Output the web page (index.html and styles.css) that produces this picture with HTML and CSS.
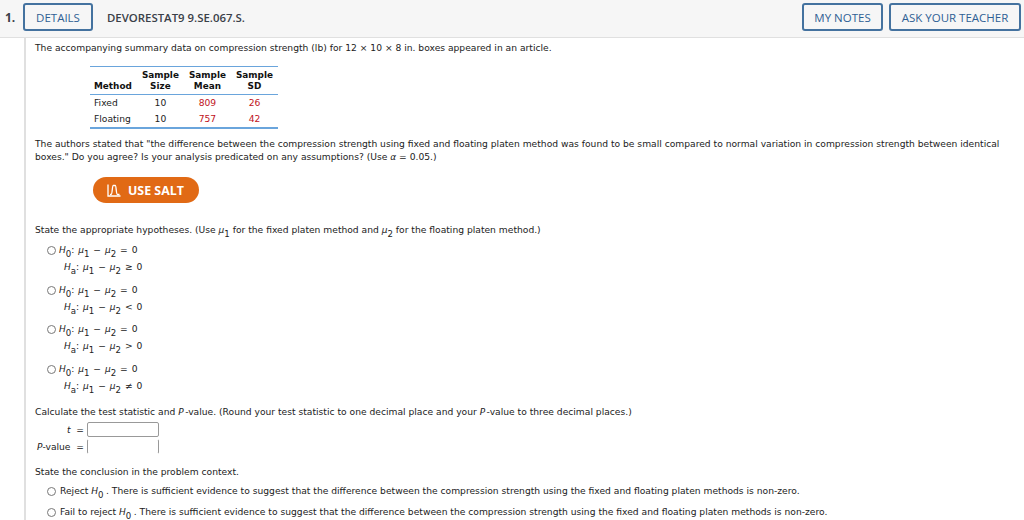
FILE: index.html
```html
<!DOCTYPE html>
<html lang="en">
<head>
<meta charset="utf-8">
<title>DEVORESTAT9 9.SE.067.S.</title>
<link rel="stylesheet" href="styles.css">
</head>
<body>
<header class="bar">
  <span class="qnum">1.</span>
  <button class="btn details">DETAILS</button>
  <span class="code">DEVORESTAT9 9.SE.067.S.</span>
  <span class="spacer"></span>
  <button class="btn notes">MY NOTES</button>
  <button class="btn ask">ASK YOUR TEACHER</button>
</header>
<main class="content">
  <p class="intro">The accompanying summary data on compression strength (lb) for 12 × 10 × 8 in. boxes appeared in an article.</p>
  <table class="data">
    <thead>
      <tr><th class="left">Method</th><th>Sample<br>Size</th><th>Sample<br>Mean</th><th>Sample<br>SD</th></tr>
    </thead>
    <tbody>
      <tr><td class="left">Fixed</td><td>10</td><td class="red">809</td><td class="red">26</td></tr>
      <tr><td class="left">Floating</td><td>10</td><td class="red">757</td><td class="red">42</td></tr>
    </tbody>
  </table>
  <p class="para">The authors stated that "the difference between the compression strength using fixed and floating platen method was found to be small compared to normal variation in compression strength between identical boxes." Do you agree? Is your analysis predicated on any assumptions? (Use <i class="m">α</i> = 0.05.)</p>
  <button class="salt">
    <svg class="salt-icon" viewBox="0 0 14 13" width="14" height="13"><path d="M1 0.5V12H13.5" fill="none" stroke="#fff" stroke-width="1.3"/><path d="M3 10.5H4C5.6 10.5 5 1.5 6.3 1.5H8.2C9.5 1.5 8.9 10.5 10.5 10.5H12.5" fill="none" stroke="#fff" stroke-width="1.3"/></svg>
    USE SALT
  </button>
  <p class="state">State the appropriate hypotheses. (Use <i class="m">μ</i><sub>1</sub> for the fixed platen method and <i class="m">μ</i><sub>2</sub> for the floating platen method.)</p>
  <div class="options">
    <div class="opt"><span class="radio"></span><div class="hyp"><div class="h0"><i class="m">H</i><sub>0</sub>: <i class="m">μ</i><sub>1</sub> − <i class="m">μ</i><sub>2</sub> = 0</div><div class="ha"><i class="m">H</i><sub>a</sub>: <i class="m">μ</i><sub>1</sub> − <i class="m">μ</i><sub>2</sub> ≥ 0</div></div></div>
    <div class="opt"><span class="radio"></span><div class="hyp"><div class="h0"><i class="m">H</i><sub>0</sub>: <i class="m">μ</i><sub>1</sub> − <i class="m">μ</i><sub>2</sub> = 0</div><div class="ha"><i class="m">H</i><sub>a</sub>: <i class="m">μ</i><sub>1</sub> − <i class="m">μ</i><sub>2</sub> &lt; 0</div></div></div>
    <div class="opt"><span class="radio"></span><div class="hyp"><div class="h0"><i class="m">H</i><sub>0</sub>: <i class="m">μ</i><sub>1</sub> − <i class="m">μ</i><sub>2</sub> = 0</div><div class="ha"><i class="m">H</i><sub>a</sub>: <i class="m">μ</i><sub>1</sub> − <i class="m">μ</i><sub>2</sub> &gt; 0</div></div></div>
    <div class="opt"><span class="radio"></span><div class="hyp"><div class="h0"><i class="m">H</i><sub>0</sub>: <i class="m">μ</i><sub>1</sub> − <i class="m">μ</i><sub>2</sub> = 0</div><div class="ha"><i class="m">H</i><sub>a</sub>: <i class="m">μ</i><sub>1</sub> − <i class="m">μ</i><sub>2</sub> ≠ 0</div></div></div>
  </div>
  <p class="calc">Calculate the test statistic and <i class="m">P</i>-value. (Round your test statistic to one decimal place and your <i class="m">P</i>-value to three decimal places.)</p>
  <div class="answers">
    <div class="ans"><span class="ans-label"><i class="m">t</i>&nbsp;&nbsp;=</span><span class="field"></span></div>
    <div class="ans"><span class="ans-label"><i class="m">P</i>-value&nbsp;&nbsp;=</span><span class="field open"></span></div>
  </div>
  <p class="concl">State the conclusion in the problem context.</p>
  <div class="choice"><span class="radio"></span><span>Reject <i class="m">H</i><sub>0</sub>. There is sufficient evidence to suggest that the difference between the compression strength using the fixed and floating platen methods is non-zero.</span></div>
  <div class="choice second"><span class="radio"></span><span>Fail to reject <i class="m">H</i><sub>0</sub>. There is sufficient evidence to suggest that the difference between the compression strength using the fixed and floating platen methods is non-zero.</span></div>
</main>
</body>
</html>
```
FILE: styles.css
```css
html, body {
  margin: 0;
  height: 520px;
  overflow: hidden;
  background: #fff;
}
body {
  font-family: "DejaVu Sans", sans-serif;
  font-size: 9.16px;
  line-height: 13px;
  color: #222;
}
p { margin: 0; }
.bar {
  display: flex;
  align-items: center;
  height: 34px;
  padding: 0 3px 3px 0;
  border-bottom: 1px solid #e0e0e0;
  background: #f6f6f6;
  font-family: "Open Sans", sans-serif;
}
.qnum {
  width: 23px;
  padding-left: 5px;
  box-sizing: border-box;
  font-size: 12px;
  font-weight: 700;
  color: #3a4048;
}
.btn {
  height: 28px;
  box-sizing: border-box;
  margin: 0;
  padding: 0;
  border: 2px solid #44729f;
  border-radius: 3px;
  background: #f6f6f6;
  color: #2f5f94;
  font-family: "Open Sans", sans-serif;
  font-size: 11.5px;
  font-weight: 400;
}
.details { width: 70px; }
.notes { width: 81px; margin-right: 6px; }
.ask { width: 132px; }
.code {
  margin-left: 14px;
  font-size: 11.4px;
  font-weight: 600;
  color: #3a4048;
}
.spacer { flex: 1; }
.content {
  margin-left: 24px;
  border-left: 2px solid #e0e0e0;
  padding: 3px 0 0 9px;
  height: 479px;
}
.intro { height: 13px; }
.data {
  border-collapse: collapse;
  margin: 12px 0 0 55px;
  border-top: 1px solid #6aa5dc;
  border-bottom: 2px solid #6aa5dc;
  color: #222;
}
.data th {
  font-size: 8.9px;
  font-weight: 700;
  color: #111;
  padding: 3px 5px 2px;
  line-height: 11px;
  vertical-align: bottom;
  border-bottom: 1px solid #6aa5dc;
  text-align: center;
}
.data td {
  padding: 0 5px;
  height: 16px;
  line-height: 16px;
  text-align: center;
}
.data .left { text-align: left; padding-left: 4px; }
.data .red { color: #c0121c; }
.para { margin-top: 8px; width: 975px; }
.salt {
  display: flex;
  align-items: center;
  gap: 7px;
  width: 106px;
  height: 26px;
  margin: 13px 0 0 58px;
  padding: 0 0 0 14px;
  border: 0;
  border-radius: 13px;
  background: #e16a15;
  color: #fff;
  font-family: "Open Sans", sans-serif;
  font-size: 12.4px;
  font-weight: 700;
}
.salt-icon { display: block; }
.state { margin-top: 20px; }
.m { font-style: italic; font-size: 9px; }
sub { font-size: 8.6px; line-height: 0; vertical-align: -4px; }
.options { margin-top: 7px; }
.opt {
  display: flex;
  align-items: flex-start;
  margin-left: 12px;
  height: 39.5px;
}
.radio {
  flex: none;
  width: 7px;
  height: 7px;
  border: 1px solid #777;
  border-radius: 50%;
  background: #fff;
  margin-top: 2px;
  margin-right: 3px;
}
.hyp { line-height: 15px; margin-top: -2px; word-spacing: 1px; }
.h0, .ha { height: 17px; }
.ha { margin-left: 5px; }
.calc { margin-top: 3px; }
.calc .m { margin-right: 1.5px; }
.answers { margin-top: 2px; }
.ans {
  display: flex;
  align-items: center;
  height: 17px;
}
.ans-label { width: 49px; text-align: right; margin-right: 3px; white-space: nowrap; }
.field {
  width: 70px;
  height: 13px;
  border: 1px solid #999;
  border-radius: 2px;
  background: #fff;
}
.field.open { border-top-color: transparent; border-bottom-color: transparent; }
.concl { margin-top: 10px; }
.choice {
  display: flex;
  align-items: center;
  gap: 4px;
  margin: 6px 0 0 12px;
}
.choice sub { margin-right: 2.5px; }
.choice .radio { margin: 0; }
.choice.second { margin-top: 7px; }
```
